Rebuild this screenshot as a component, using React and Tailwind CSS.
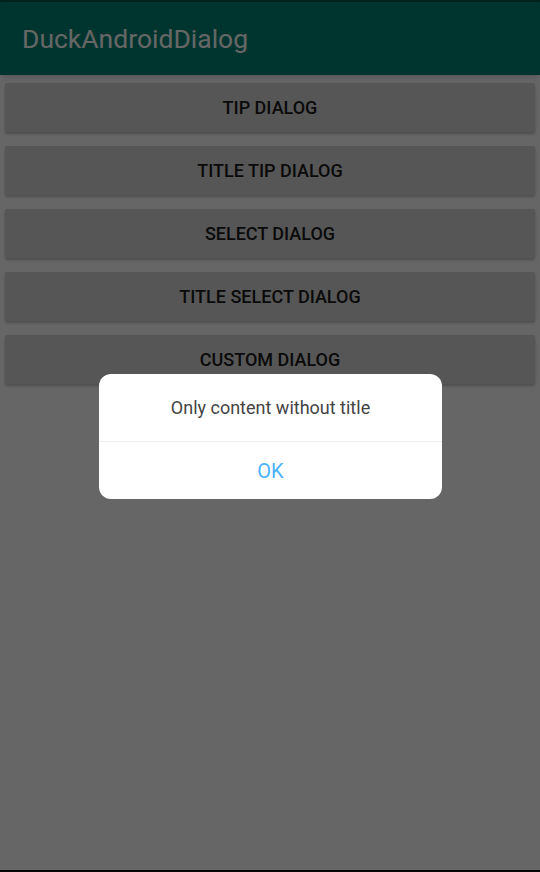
const buttons = ['TIP DIALOG', 'TITLE TIP DIALOG', 'SELECT DIALOG', 'TITLE SELECT DIALOG', 'CUSTOM DIALOG'];

export default function App() {
  return (
    <div className="relative h-[872px] w-[540px] overflow-hidden bg-white" style={{ fontFamily: 'Roboto, "Noto Sans", sans-serif' }}>
      <div className="h-[2px] bg-[#00574b]" />
      {/* App bar */}
      <div className="flex h-[73px] items-center bg-[#008577] px-[22px] shadow-md">
        <h1 className="text-[26.5px] text-white">DuckAndroidDialog</h1>
      </div>

      {/* Buttons */}
      <div className="flex flex-col gap-[14px] px-[5px] pt-[8px]">
        {buttons.map((b) => (
          <div
            key={b}
            className="flex h-[49px] items-center justify-center rounded-[2px] bg-[#d6d6d6] text-[18px] font-medium text-[#1a1a1a] shadow-[0_2px_3px_rgba(0,0,0,0.25)]"
          >
            {b}
          </div>
        ))}
      </div>

      <div className="absolute bottom-0 left-0 h-[2px] w-full bg-[#111]" />

      {/* Dim overlay */}
      <div className="absolute inset-0 bg-black/60" />

      {/* Dialog */}
      <div className="absolute left-[99px] top-[374px] w-[343px] overflow-hidden rounded-[12px] bg-white">
        <div className="flex h-[67px] items-center justify-center text-[18px] text-[#444]">
          Only content without title
        </div>
        <div className="h-px bg-[#eeeeee]" />
        <div className="flex h-[57px] items-center justify-center text-[20px] text-[#4db2ff]">OK</div>
      </div>
    </div>
  );
}
